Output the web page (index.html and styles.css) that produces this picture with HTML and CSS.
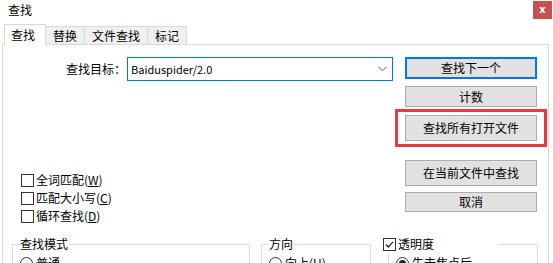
FILE: index.html
```html
<!DOCTYPE html>
<html lang="zh-CN">
<head>
<meta charset="utf-8">
<title>查找</title>
<link rel="stylesheet" href="styles.css">
</head>
<body>
<div class="window">
  <div class="titlebar">
    <span class="title">查找</span>
    <span class="close">x</span>
  </div>
  <div class="tabs">
    <div class="tab active">查找</div>
    <div class="tab">替换</div>
    <div class="tab">文件查找</div>
    <div class="tab">标记</div>
  </div>
  <div class="panel">
    <div class="top">
      <div class="left">
        <div class="search-row">
          <span class="search-label">查找目标：</span>
          <div class="combo">
            <span class="combo-text">Baiduspider/2.0</span>
            <svg class="chevron" width="9" height="6" viewBox="0 0 9 6"><path d="M0.5 0.8 L4.5 4.8 L8.5 0.8" fill="none" stroke="#555" stroke-width="1"/></svg>
          </div>
        </div>
        <div class="checks">
          <div class="check"><span class="box"></span><span>全词匹配(<u>W</u>)</span></div>
          <div class="check"><span class="box"></span><span>匹配大小写(<u>C</u>)</span></div>
          <div class="check"><span class="box"></span><span>循环查找(<u>D</u>)</span></div>
        </div>
      </div>
      <div class="buttons">
        <div class="btn default">查找下一个</div>
        <div class="btn small">计数</div>
        <div class="highlight"><div class="btn tall">查找所有打开文件</div></div>
        <div class="btn tall after-highlight">在当前文件中查找</div>
        <div class="btn cancel">取消</div>
      </div>
    </div>
    <div class="groups">
      <fieldset class="group g-mode">
        <legend>查找模式</legend>
        <div class="radio-row"><span class="radio"></span><span>普通</span></div>
      </fieldset>
      <fieldset class="group g-dir">
        <legend>方向</legend>
        <div class="radio-row"><span class="radio"></span><span>向上(<u>U</u>)</span></div>
      </fieldset>
      <fieldset class="group g-trans">
        <legend class="legend-check"><span class="box checked"><svg width="11" height="11" viewBox="0 0 11 11"><path d="M2 5.5 L4.3 8 L9 2.8" fill="none" stroke="#222" stroke-width="1.2"/></svg></span><span>透明度</span></legend>
        <div class="radio-row"><span class="radio selected"></span><span>失去焦点后</span></div>
      </fieldset>
    </div>
  </div>
</div>
</body>
</html>
```
FILE: styles.css
```css
* { box-sizing: border-box; }
html, body {
  margin: 0;
  padding: 0;
  background: #ffffff;
}
body {
  width: 553px;
  height: 263px;
  overflow: hidden;
  font-family: "Noto Sans CJK SC", "Noto Sans", sans-serif;
  font-size: 12px;
  line-height: 16px;
  color: #000;
}
.window {
  width: 553px;
}
.titlebar {
  height: 24px;
  display: flex;
  justify-content: space-between;
  align-items: flex-start;
  padding-left: 8px;
  padding-right: 1px;
}
.title {
  margin-top: 2px;
  font-size: 12px;
}
.close {
  margin-top: 1px;
  width: 19px;
  height: 18px;
  background: #c75050;
  color: #fff;
  font-family: "DejaVu Sans", sans-serif;
  font-weight: bold;
  font-size: 10px;
  line-height: 17px;
  text-align: center;
}
.tabs {
  display: flex;
  align-items: flex-start;
  height: 21px;
  margin-left: 4px;
  margin-bottom: -1px;
  position: relative;
  z-index: 1;
}
.tab {
  height: 18px;
  margin-top: 2px;
  padding: 0 7px;
  background: #f0f0f0;
  border: 1px solid #d9d9d9;
  border-bottom: none;
  border-left: none;
  line-height: 17px;
}
.tab.active {
  height: 21px;
  margin-top: 0;
  padding: 0 10px 0 6px;
  background: #fff;
  border-left: 1px solid #d9d9d9;
  border-right: 1px solid #d9d9d9;
  line-height: 20px;
}
.panel {
  margin-left: 2px;
  width: 547px;
  height: 240px;
  border: 1px solid #d9d9d9;
  border-bottom: none;
  padding-right: 10px;
}
.top {
  display: grid;
  grid-template-columns: 402px 132px;
  height: 191px;
}
.search-row {
  margin-top: 12px;
  display: flex;
  justify-content: flex-end;
  align-items: center;
  padding-right: 12px;
  gap: 1px;
}
.search-label {
  line-height: 16px;
}
.combo {
  width: 266px;
  height: 24px;
  border: 1px solid #0078d7;
  display: flex;
  align-items: center;
  justify-content: space-between;
  padding: 0 5px 0 3px;
}
.combo-text {
  font-size: 11px;
}
.chevron {
  display: block;
}
.checks {
  margin-top: 90px;
  padding-left: 18px;
  display: flex;
  flex-direction: column;
}
.check {
  height: 18px;
  display: flex;
  align-items: center;
  gap: 2px;
}
.box {
  width: 13px;
  height: 13px;
  border: 1px solid #333;
  background: #fff;
  flex: none;
  display: flex;
  align-items: center;
  justify-content: center;
}
.box svg { display: block; }
u { text-underline-offset: 1px; }
.buttons {
  display: flex;
  flex-direction: column;
  padding-top: 12px;
}
.btn {
  height: 22px;
  background: #e1e1e1;
  border: 1px solid #adadad;
  display: flex;
  align-items: center;
  justify-content: center;
}
.btn.default {
  border: 2px solid #0078d7;
}
.btn.small {
  margin-top: 7px;
  height: 21px;
}
.highlight {
  margin: 2px -10px 0 -10px;
  border: 3px solid #e8393e;
  padding: 3px 7px;
}
.btn.tall {
  height: 26px;
}
.btn.after-highlight {
  margin-top: 13px;
}
.btn.cancel {
  margin-top: 6px;
  height: 20px;
}
.groups {
  display: flex;
  padding-left: 9px;
}
fieldset.group {
  margin: 0;
  height: 60px;
  border: 1px solid #dcdcdc;
  padding: 3px 7px 0 7px;
  min-width: 0;
}
fieldset.group legend {
  padding: 0;
  line-height: 16px;
  background: #fff;
}
.g-mode { width: 238px; }
.g-dir { width: 110px; margin-left: 11px !important; }
.g-trans { width: 150px; margin-left: 17px !important; }
.legend-check {
  width: 115px;
  margin-left: -13px;
  display: flex;
  align-items: center;
  gap: 2px;
}
.radio-row {
  display: flex;
  align-items: center;
  gap: 3px;
  height: 16px;
}
.radio {
  width: 13px;
  height: 13px;
  border: 1px solid #333;
  border-radius: 50%;
  flex: none;
  display: flex;
  align-items: center;
  justify-content: center;
}
.radio.selected::after {
  content: "";
  width: 7px;
  height: 7px;
  border-radius: 50%;
  background: #222;
}
```
